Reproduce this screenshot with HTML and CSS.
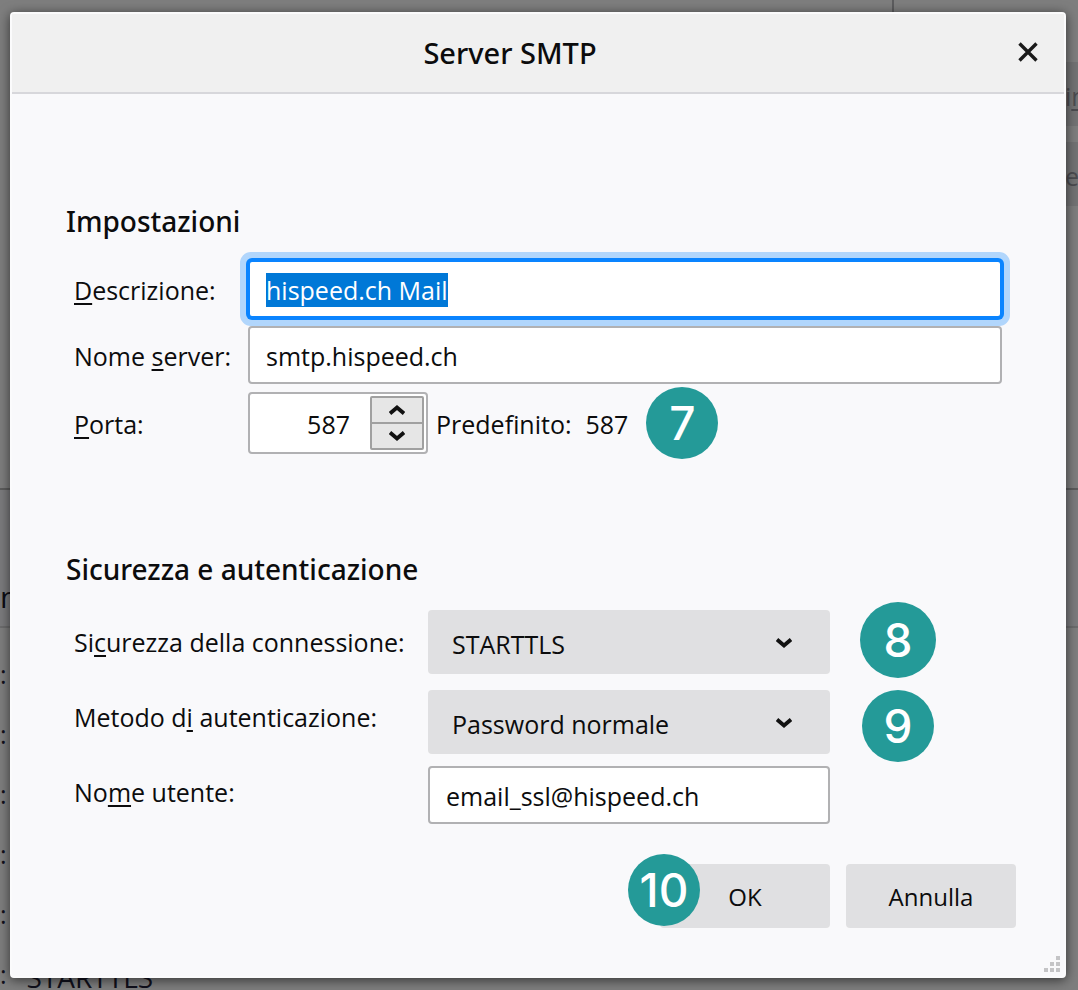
FILE: index.html
```html
<!DOCTYPE html>
<html lang="it">
<head>
<meta charset="UTF-8" />
<meta name="viewport" content="width=device-width, initial-scale=1" />
<title>Server SMTP</title>
<link rel="stylesheet" href="styles.css">
</head>
<body>

<!-- settings window behind the dialog -->
<div class="backdrop" aria-hidden="true">
  <div class="back-top">
    <div class="back-list"></div>
    <div class="back-actions">
      <div class="back-button">i<u>n</u></div>
      <div class="back-button">e</div>
    </div>
  </div>
  <div class="back-heading">n</div>
  <div class="back-details">
    <div class="back-row">:</div>
    <div class="back-row">:</div>
    <div class="back-row">:</div>
    <div class="back-row">:</div>
    <div class="back-row">:</div>
    <div class="back-row">:<span>STARTTLS</span></div>
  </div>
</div>

<form class="dialog" role="dialog" aria-labelledby="title">
  <header class="titlebar">
    <h1 id="title">Server SMTP</h1>
    <button type="button" class="close" aria-label="Chiudi">
      <svg width="20" height="20" viewBox="0 0 20 20"><path d="M1.5 1.5l17 17M18.5 1.5l-17 17" fill="none" stroke="#1a1a1a" stroke-width="3.4"/></svg>
    </button>
  </header>

  <div class="content">
    <section class="settings">
      <h2>Impostazioni</h2>
      <div class="fields">
        <label for="description"><u>D</u>escrizione:</label>
        <input class="text active" id="description" type="text" value="hispeed.ch Mail" autofocus>

        <label for="server">Nome <u>s</u>erver:</label>
        <input class="text" id="server" type="text" value="smtp.hispeed.ch">

        <label for="port"><u>P</u>orta:</label>
        <div class="port-row">
          <div class="spinner">
            <input id="port" type="text" inputmode="numeric" value="587">
            <div class="spin-buttons">
              <button type="button" data-step="1" aria-label="Aumenta">
                <svg width="16" height="10" viewBox="0 0 16 10"><path d="M1 8.5L8 2.5l7 6" fill="none" stroke="#111" stroke-width="3.8"/></svg>
              </button>
              <button type="button" data-step="-1" aria-label="Diminuisci">
                <svg width="16" height="10" viewBox="0 0 16 10"><path d="M1 1.5l7 6 7-6" fill="none" stroke="#111" stroke-width="3.8"/></svg>
              </button>
            </div>
          </div>
          <span class="default">Predefinito:</span>
          <span class="default-port">587</span>
          <span class="badge">7</span>
        </div>
      </div>
    </section>

    <section class="security">
      <h2>Sicurezza e autenticazione</h2>
      <div class="security-fields">
        <div class="labels">
          <label for="connection">Si<u>c</u>urezza della connessione:</label>
          <label for="method">Metodo d<u>i</u> autenticazione:</label>
          <label for="user">No<u>m</u>e utente:</label>
        </div>
        <div class="controls">
          <div class="select">
            <select id="connection"><option>STARTTLS</option></select>
            <svg width="16" height="10" viewBox="0 0 16 10"><path d="M1 1.5l7 6 7-6" fill="none" stroke="#111" stroke-width="3.8"/></svg>
            <span class="badge large">8</span>
          </div>
          <div class="select">
            <select id="method"><option>Password normale</option></select>
            <svg width="16" height="10" viewBox="0 0 16 10"><path d="M1 1.5l7 6 7-6" fill="none" stroke="#111" stroke-width="3.8"/></svg>
            <span class="badge">9</span>
          </div>
          <input class="text" id="user" type="text" value="email_ssl@hispeed.ch">
        </div>
      </div>
    </section>

    <footer class="actions">
      <div class="action">
        <button type="submit">OK</button>
        <span class="badge">10</span>
      </div>
      <div class="action">
        <button type="button">Annulla</button>
      </div>
    </footer>
  </div>

  <svg class="resizer" width="16" height="16" viewBox="0 0 16 16" fill="#c4c4c6"><path d="M12 0h4v4h-4zM6 6h4v4H6zM12 6h4v4h-4zM0 12h4v4H0zM6 12h4v4H6zM12 12h4v4h-4z"/></svg>
</form>

<script>
  const port = document.getElementById('port');

  document.querySelectorAll('[data-step]').forEach(button => {
    button.addEventListener('click', () => {
      port.value = Number(port.value) + Number(button.dataset.step);
    });
  });

  document.querySelector('.dialog').addEventListener('submit', e => e.preventDefault());

  const description = document.getElementById('description');
  description.focus();
  description.select();
</script>

</body>
</html>
```
FILE: styles.css
```css
* {
  box-sizing: border-box;
}
body {
  margin: 0;
  padding: 12px 12px 12px 10px;
  background: #7e7e7e;
  color: #0c0c0d;
  font-family: "Open Sans", "Noto Sans", sans-serif;
  font-size: 25px;
  line-height: 34px;
  overflow: hidden;
}
h1, h2 {
  margin: 0;
  font-family: "Noto Sans", "Open Sans", sans-serif;
  font-size: 28px;
  font-weight: 500;
  line-height: 36px;
}
u {
  text-decoration-thickness: 2px;
  text-underline-offset: 3px;
}
button, input, select {
  font: inherit;
  color: inherit;
}

/* window behind */
.backdrop {
  position: absolute;
  inset: 0;
  overflow: hidden;
}
.back-top {
  display: flex;
  height: 490px;
  border-bottom: 2px solid #5c5c5c;
}
.back-list {
  flex: 1;
  border-right: 2px solid #5c5c5e;
}
.back-actions {
  display: flex;
  flex-direction: column;
  gap: 16px;
  width: 184px;
  padding-top: 62px;
}
.back-button {
  height: 64px;
  padding-left: 171px;
  background: #737374;
  color: #4c4c50;
  line-height: 68px;
}
.back-heading {
  height: 138px;
  padding-top: 90px;
  background: #7b7b7d;
  border-bottom: 2px solid #6c6c6d;
  color: #0c0c14;
  font-size: 30px;
}
.back-details {
  padding-top: 16px;
  color: #10101c;
}
.back-row {
  display: flex;
  gap: 20px;
  height: 60px;
  line-height: 60px;
}
.back-row span {
  font-size: 28px;
  line-height: 66px;
}

/* dialog */
.dialog {
  position: relative;
  background: #f9f9fb;
  border: 2px solid #fbfbfc;
  border-radius: 4px;
  box-shadow: 0 2px 12px rgba(0, 0, 0, 0.6);
}
.titlebar {
  display: flex;
  align-items: center;
  height: 80px;
  padding-right: 16px;
  background: #f0f0f0;
  border-bottom: 2px solid #d7d7db;
}
.titlebar h1 {
  flex: 1;
  font-size: 29px;
  text-align: center;
}
.close {
  display: flex;
  justify-content: center;
  width: 40px;
  padding: 9px 0 11px;
  border: none;
  background: none;
}
.content {
  padding: 109px 48px 48px 54px;
}
.fields {
  display: grid;
  grid-template-columns: 174px 1fr;
  align-items: center;
  row-gap: 8px;
  padding: 21px 14px 0 8px;
}
.fields label, .default, .default-port {
  padding-top: 2px;
}
.text {
  width: 100%;
  height: 58px;
  padding: 2px 16px 0;
  border: 2px solid #b1b1b3;
  border-radius: 4px;
  background: #fff;
  outline: none;
}
.text.active {
  border-color: #0a84ff;
  box-shadow: 0 0 0 2px #0a84ff, 0 0 0 8px rgba(10, 132, 255, 0.3);
}
.text::selection {
  background: #0078d7;
  color: #fff;
}
#server {
  position: relative;
}
.port-row {
  display: flex;
  align-items: center;
}
.spinner {
  display: flex;
  width: 180px;
  height: 62px;
  padding: 2px;
  border: 2px solid #b1b1b3;
  border-radius: 4px;
  background: #fff;
}
.spinner input {
  flex: 1;
  min-width: 0;
  padding: 2px 20px 0 0;
  border: none;
  background: none;
  text-align: right;
  outline: none;
}
.spin-buttons {
  display: flex;
  flex-direction: column;
  width: 54px;
  border: 2px solid #a0a0a0;
  border-radius: 2px;
}
.spin-buttons button {
  display: flex;
  flex: 1;
  align-items: center;
  justify-content: center;
  padding: 0;
  border: none;
  background: #e6e6e6;
}
.spin-buttons button + button {
  border-top: 2px solid #a0a0a0;
}
.default {
  margin-left: 8px;
}
.default-port {
  margin: 0 18px 0 14px;
}

.badge {
  display: flex;
  flex: none;
  align-items: center;
  justify-content: center;
  width: 72px;
  height: 72px;
  border-radius: 50%;
  background: #249a98;
  color: #fff;
  font-family: Inter, sans-serif;
  font-size: 46px;
  font-weight: 500;
}
.badge.large {
  width: 76px;
  height: 76px;
}
.port-row .badge {
  margin: -5px 0;
}

.security {
  margin-top: 97px;
}
.security-fields {
  display: grid;
  grid-template-columns: 354px minmax(0, 402px);
  padding: 23px 0 0 8px;
}
.labels {
  display: flex;
  flex-direction: column;
  gap: 41px;
  padding-top: 15px;
}
.select {
  position: relative;
  margin-bottom: 16px;
}
.select + .select {
  margin-bottom: 12px;
}
.select select {
  display: block;
  width: 100%;
  height: 64px;
  padding: 4px 24px 0;
  border: none;
  border-radius: 4px;
  background: #e0e0e2;
  appearance: none;
}
.select > svg {
  position: absolute;
  top: 28px;
  right: 38px;
  pointer-events: none;
}
.select .badge {
  position: absolute;
  top: 0;
  left: calc(100% + 32px);
}
.select .badge.large {
  top: -8px;
  left: calc(100% + 30px);
}

.actions {
  display: flex;
  justify-content: flex-end;
  gap: 16px;
  margin-top: 40px;
}
.action {
  position: relative;
}
.action button {
  width: 170px;
  height: 64px;
  padding: 2px 0 0;
  border: none;
  border-radius: 4px;
  background: #e0e0e2;
  font-size: 24px;
}
.action .badge {
  position: absolute;
  top: -10px;
  left: -32px;
}
.resizer {
  position: absolute;
  right: 4px;
  bottom: 4px;
}
```
